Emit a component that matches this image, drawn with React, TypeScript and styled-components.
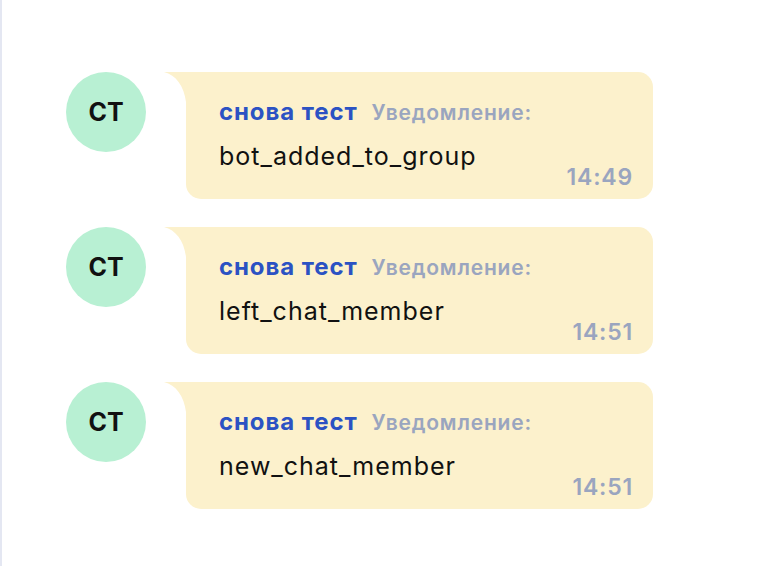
import React from "react";
import styled, { createGlobalStyle } from "styled-components";

const Global = createGlobalStyle`
  html, body { margin: 0; padding: 0; background: #ffffff; }
  body { font-family: "Inter", "Noto Sans", sans-serif; }
`;

const Page = styled.div`
  width: 766px;
  height: 566px;
  box-sizing: border-box;
  border-left: 2px solid #e4e7f2;
  padding: 72px 0 0 64px;
  display: flex;
  flex-direction: column;
  gap: 28px;
  overflow: hidden;
`;

const Row = styled.div`
  display: flex;
  align-items: flex-start;
`;

const Avatar = styled.div`
  width: 80px;
  height: 80px;
  border-radius: 50%;
  background: #b8f0d3;
  color: #111111;
  font-weight: 700;
  font-size: 25px;
  display: flex;
  align-items: center;
  justify-content: center;
  flex: none;
`;

const Tail = styled.svg`
  width: 22px;
  height: 30px;
  margin-left: 18px;
  flex: none;
  display: block;
`;

const Bubble = styled.div`
  width: 467px;
  height: 127px;
  box-sizing: border-box;
  background: #fcf1cc;
  border-radius: 0 15px 15px 15px;
  padding: 26px 20px 0 33px;
  display: flex;
  flex-direction: column;
`;

const Header = styled.div`
  display: flex;
  align-items: baseline;
  gap: 14px;
  line-height: 28px;
`;

const Name = styled.span`
  color: #2b52c3;
  font-weight: 700;
  font-size: 24px;
  letter-spacing: 0.9px;
`;

const Label = styled.span`
  color: #9aa5bf;
  font-weight: 600;
  font-size: 21px;
  letter-spacing: 0.8px;
`;

const Text = styled.div`
  color: #111111;
  font-size: 25px;
  line-height: 32px;
  letter-spacing: 1px;
  margin-top: 13px;
`;

const Time = styled.div`
  color: #9aa5bf;
  font-weight: 600;
  font-size: 23px;
  line-height: 26px;
  letter-spacing: 0.8px;
  text-align: right;
  margin-top: -8px;
`;

const messages = [
  { text: "bot_added_to_group", time: "14:49" },
  { text: "left_chat_member", time: "14:51" },
  { text: "new_chat_member", time: "14:51" },
];

export default function App() {
  return (
    <>
      <Global />
      <Page>
        {messages.map((m, i) => (
          <Row key={i}>
            <Avatar>СТ</Avatar>
            <Tail viewBox="0 0 22 30">
              <path d="M0 0 H22 V30 C20 14 12 3 0 0 Z" fill="#fcf1cc" />
            </Tail>
            <Bubble>
              <Header>
                <Name>снова тест</Name>
                <Label>Уведомление:</Label>
              </Header>
              <Text>{m.text}</Text>
              <Time>{m.time}</Time>
            </Bubble>
          </Row>
        ))}
      </Page>
    </>
  );
}
